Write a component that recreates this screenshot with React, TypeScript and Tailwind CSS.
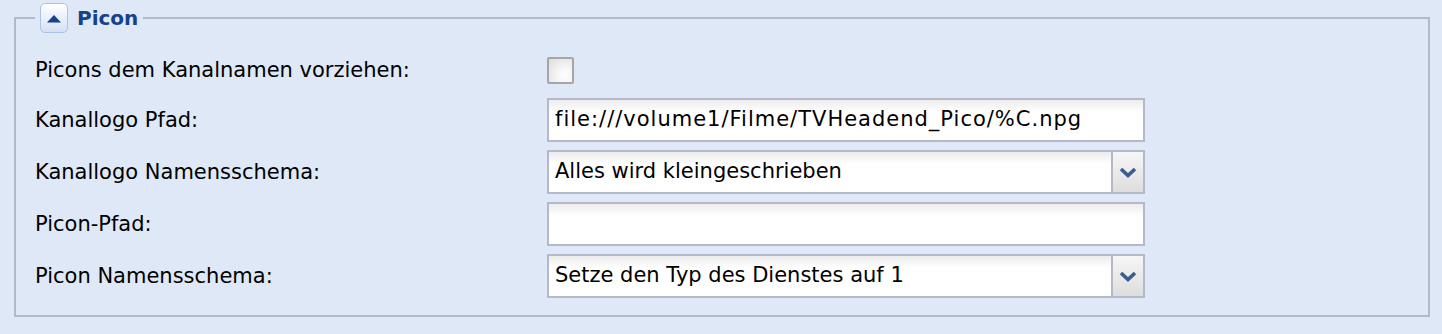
import React from "react";

const font = { fontFamily: '"DejaVu Sans", Tahoma, sans-serif' };

function Label({ children }: { children: React.ReactNode }) {
  return <div className="w-[512px] shrink-0 text-[21px] text-black leading-none">{children}</div>;
}

function TextInput({ value, spaced }: { value: string; spaced?: boolean }) {
  return (
    <div
      className={
        "w-[598px] h-[44px] border-2 border-[#b5b8c8] bg-gradient-to-b from-[#ececec] via-white via-[30%] to-white flex items-center pl-[6px] text-[21px] text-black" +
        (spaced ? " tracking-[1px]" : "")
      }
    >
      {value}
    </div>
  );
}

function Select({ value }: { value: string }) {
  return (
    <div className="w-[598px] h-[44px] flex">
      <div className="flex-1 border-2 border-r-0 border-[#b5b8c8] bg-gradient-to-b from-[#ececec] via-white via-[30%] to-white flex items-center pl-[6px] text-[21px] text-black">
        {value}
      </div>
      <div className="w-[34px] h-full border-2 border-[#b5b8c8] bg-gradient-to-b from-[#f6f6f6] to-[#dedede] flex items-center justify-center">
        <svg width="18" height="11" viewBox="0 0 18 11">
          <path d="M2 2 L9 8.5 L16 2" fill="none" stroke="#3b5c8e" strokeWidth="3.6" strokeLinecap="butt" strokeLinejoin="miter" />
        </svg>
      </div>
    </div>
  );
}

export default function App() {
  return (
    <div className="w-[1442px] h-[334px] bg-[#dfe8f6] pt-[3px] pl-[14px]" style={font}>
      <fieldset className="w-[1416px] border-2 border-[#b5b8c8] pl-[19px] pr-[19px] pb-[17px] pt-[24px] m-0">
        <legend className="pl-[5px] pr-[5px] flex items-center gap-[9px]">
          <span className="w-[28px] h-[30px] rounded-[5px] border border-[#a9c3e6] bg-gradient-to-b from-white to-[#d4e1f3] flex items-center justify-center">
            <svg width="16" height="9" viewBox="0 0 16 9">
              <path d="M1 8.5 L8 1 L15 8.5 Z" fill="#15428b" />
            </svg>
          </span>
          <span className="text-[20px] font-bold text-[#15428b]">Picon</span>
        </legend>
        <div className="flex flex-col">
          <div className="flex items-center h-[27px]">
            <Label>Picons dem Kanalnamen vorziehen:</Label>
            <div className="w-[27px] h-[27px] border-2 border-[#a6a6a6] rounded-[2px] bg-[radial-gradient(circle_at_70%_70%,#ffffff_0%,#f4f4f4_40%,#dcdcdc_100%)]" />
          </div>
          <div className="flex items-center mt-[14px]">
            <Label>Kanallogo Pfad:</Label>
            <TextInput value="file:///volume1/Filme/TVHeadend_Pico/%C.npg" spaced />
          </div>
          <div className="flex items-center mt-[8px]">
            <Label>Kanallogo Namensschema:</Label>
            <Select value="Alles wird kleingeschrieben" />
          </div>
          <div className="flex items-center mt-[8px]">
            <Label>Picon-Pfad:</Label>
            <TextInput value="" />
          </div>
          <div className="flex items-center mt-[8px]">
            <Label>Picon Namensschema:</Label>
            <Select value="Setze den Typ des Dienstes auf 1" />
          </div>
        </div>
      </fieldset>
    </div>
  );
}
